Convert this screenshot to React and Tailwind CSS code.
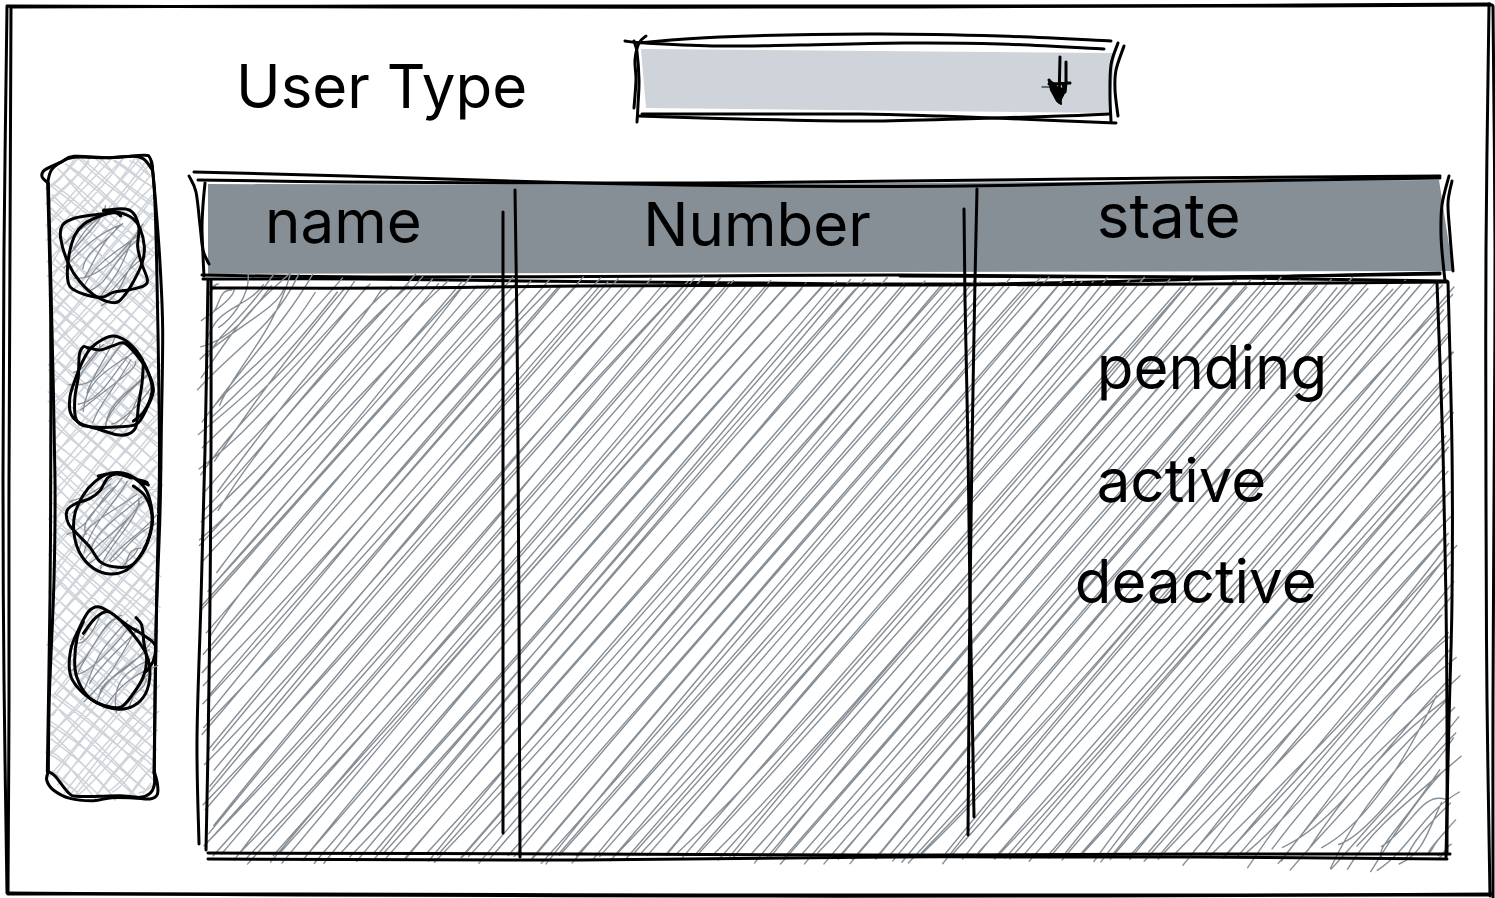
import React from "react";

/* ---------- sketch helpers ---------- */

function createRandom(seed) {
  let s = seed;
  return () => {
    s = (Math.imul(48271, s) >>> 0) & 0x7fffffff;
    return s / 0x7fffffff;
  };
}

// Smooth curve through a list of points.
function curve(points) {
  let d = `M${points[0][0]} ${points[0][1]}`;
  for (let i = 0; i < points.length - 1; i++) {
    const p0 = points[i - 1] || points[i];
    const p1 = points[i];
    const p2 = points[i + 1];
    const p3 = points[i + 2] || p2;
    const c1 = [p1[0] + (p2[0] - p0[0]) / 6, p1[1] + (p2[1] - p0[1]) / 6];
    const c2 = [p2[0] - (p3[0] - p1[0]) / 6, p2[1] - (p3[1] - p1[1]) / 6];
    d += `C${c1[0].toFixed(1)} ${c1[1].toFixed(1)} ${c2[0].toFixed(1)} ${c2[1].toFixed(1)} ${p2[0]} ${p2[1]}`;
  }
  return d;
}

// Hand-drawn hachure inside a polygon; `unit` is the number of drawing units per pixel.
function hatch({ polygon, angle, gap, wobble, seed, unit = 1 }) {
  const random = createRandom(seed);
  const a = (angle * Math.PI) / 180;
  const dir = [Math.cos(a), -Math.sin(a)];
  const normal = [Math.sin(a), Math.cos(a)];
  const depth = polygon.map((p) => p[0] * normal[0] + p[1] * normal[1]);
  const max = Math.max(...depth);
  let d = "";
  for (let t = Math.min(...depth) + gap / 2; t < max; t += gap) {
    const hits = [];
    polygon.forEach((p, i) => {
      const j = (i + 1) % polygon.length;
      if (depth[i] < t !== depth[j] < t) {
        const k = (t - depth[i]) / (depth[j] - depth[i]);
        hits.push([p[0] + (polygon[j][0] - p[0]) * k, p[1] + (polygon[j][1] - p[1]) * k]);
      }
    });
    if (hits.length < 2) continue;
    hits.sort((m, n) => m[0] * dir[0] + m[1] * dir[1] - n[0] * dir[0] - n[1] * dir[1]);
    const [s, e] = [hits[0], hits[hits.length - 1]];
    const length = Math.hypot(e[0] - s[0], e[1] - s[1]);
    const px = length / unit;
    const gain = px < 200 ? 1 : px > 500 ? 0.45 : 1.233 - 0.00157 * px;
    const reach = Math.min(wobble * gain, length / 5);
    for (let pass = 0; pass < 2; pass++) {
      const r = () => (random() * 2 - 1) * reach;
      const bow = ((random() * 2 - 1) * length * gain) / 60;
      const k = 0.2 + random() * 0.2;
      const at = (f) => [
        s[0] + (e[0] - s[0]) * f + normal[0] * bow + r(),
        s[1] + (e[1] - s[1]) * f + normal[1] * bow + r(),
      ];
      const c1 = at(k);
      const c2 = at(2 * k);
      const pts = [s[0] + r(), s[1] + r(), ...c1, ...c2, e[0] + r(), e[1] + r()].map((v) => v.toFixed(1));
      d += `M${pts[0]} ${pts[1]}C${pts.slice(2).join(" ")}`;
    }
  }
  return d;
}

function ellipse(cx, cy, rx, ry) {
  return Array.from({ length: 24 }, (_, i) => {
    const a = (i / 24) * Math.PI * 2;
    return [cx + rx * Math.cos(a), cy + ry * Math.sin(a)];
  });
}

function Drawing({ viewBox, children }) {
  return (
    <svg
      viewBox={viewBox}
      preserveAspectRatio="none"
      aria-hidden="true"
      className="pointer-events-none absolute inset-0 h-full w-full overflow-visible"
      fill="none"
      strokeLinecap="round"
      strokeLinejoin="round"
    >
      {children}
    </svg>
  );
}

function Ink({ lines }) {
  return lines.map((line, i) => (
    <path key={i} d={curve(line)} stroke="#000" strokeWidth="3" vectorEffect="non-scaling-stroke" />
  ));
}

function Hatch({ d, color, width }) {
  return <path d={d} stroke={color} strokeWidth={width} vectorEffect="non-scaling-stroke" />;
}

/* ---------- drawings ---------- */

const frameLines = [
  [[8, 6], [400, 7], [900, 7], [1300, 5], [1490, 4]],
  [[10, 7], [400, 6], [900, 6], [1300, 6], [1492, 5]],
  [[7, 6], [4, 250], [3, 480], [4, 680], [7, 893]],
  [[11, 8], [10, 250], [9, 480], [9, 700], [8, 893]],
  [[1489, 4], [1486, 250], [1486, 500], [1487, 700], [1490, 896]],
  [[1493, 6], [1495, 250], [1494, 500], [1493, 700], [1493, 898]],
  [[8, 893], [300, 895], [700, 896], [1100, 896], [1492, 894]],
  [[8, 894], [300, 894], [700, 895], [1100, 895], [1488, 895]],
];

const selectLines = [
  [[638, 43], [720, 37], [868, 34], [1000, 36], [1111, 41]],
  [[625, 41], [645, 43], [718, 46], [800, 45], [905, 43], [1000, 44], [1104, 49]],
  [[646, 36], [639, 43], [635, 60], [636, 80], [634, 108]],
  [[634, 41], [637, 52], [639, 80], [638, 105], [637, 122]],
  [[1118, 43], [1111, 65], [1110, 95], [1111, 121]],
  [[1124, 46], [1116, 70], [1115, 90], [1118, 116]],
  [[638, 116], [740, 119], [860, 121], [960, 119], [1060, 116], [1109, 114]],
  [[642, 114], [750, 114], [860, 114], [940, 116], [1020, 119], [1116, 123]],
];

const navLines = [
  [[143, 158], [152, 560], [152, 1050], [150, 1400], [142, 1925]],
  [[145, 158], [155, 560], [165, 1050], [162, 1350], [148, 1700], [145, 1925]],
  [[455, 95], [464, 200], [470, 400], [477, 800], [478, 1050], [470, 1400], [462, 1930]],
  [[457, 110], [467, 220], [480, 400], [488, 600], [484, 900], [480, 1150], [468, 1500], [463, 1930]],
  [[143, 158], [126, 140], [134, 120], [180, 98], [222, 79], [330, 83], [430, 76], [449, 82], [457, 110]],
  [[143, 158], [153, 122], [180, 98], [222, 82], [330, 83], [400, 79], [432, 88], [457, 120]],
  [[145, 1925], [140, 1950], [160, 1980], [210, 2005], [280, 2012], [335, 2003], [400, 2004], [450, 2007], [472, 1993], [472, 1960], [463, 1925]],
  [[145, 1925], [165, 1938], [205, 1988], [230, 1999], [300, 1999], [360, 1997], [420, 2002], [450, 1990], [463, 1965], [463, 1925]],
];

const navShape = [
  [215, 84], [430, 84], [455, 110], [468, 400], [476, 800], [476, 1100],
  [468, 1500], [460, 1960], [430, 1998], [215, 1998], [150, 1930], [152, 1400],
  [160, 1050], [152, 560], [148, 150],
];

const navHatch =
  hatch({ polygon: navShape, angle: 49, gap: 36, wobble: 13, seed: 71, unit: 3 }) +
  hatch({ polygon: navShape, angle: -41, gap: 36, wobble: 13, seed: 19, unit: 3 });

const navItems = [
  {
    label: "First item",
    viewBox: "180 228 276 300",
    hatch: hatch({ polygon: ellipse(320, 378, 108, 128), angle: 49, gap: 36, wobble: 30, seed: 401, unit: 3 }),
    lines: [
      [[310, 242], [350, 237], [385, 239], [406, 258], [417, 295], [413, 350], [425, 400], [442, 448], [432, 467], [390, 479], [340, 487], [305, 502], [250, 492], [210, 470], [202, 430], [208, 370], [225, 315], [252, 282], [300, 258], [345, 245]],
      [[362, 258], [345, 248], [285, 254], [225, 264], [188, 285], [182, 325], [205, 400], [240, 455], [290, 500], [345, 518], [370, 500], [400, 455], [426, 400], [433, 350], [420, 295], [398, 265], [360, 248], [315, 242]],
      [[312, 240], [335, 243], [358, 252]],
    ],
  },
  {
    label: "Second item",
    viewBox: "180 630 276 300",
    hatch: hatch({ polygon: ellipse(338, 768, 106, 128), angle: 49, gap: 36, wobble: 30, seed: 877, unit: 3 }),
    lines: [
      [[265, 655], [250, 650], [238, 675], [235, 740], [225, 800], [226, 860], [245, 885], [290, 892], [360, 890], [410, 882], [438, 840], [460, 785], [450, 740], [425, 695], [376, 641], [340, 647], [300, 660], [265, 653]],
      [[428, 690], [405, 657], [378, 632], [340, 618], [305, 630], [270, 657], [245, 700], [225, 750], [210, 800], [212, 850], [240, 880], [290, 896], [350, 914], [385, 912], [408, 890], [415, 830], [426, 760], [430, 700]],
      [[400, 873], [432, 845], [456, 785], [446, 730], [415, 672], [380, 640]],
    ],
  },
  {
    label: "Third item",
    viewBox: "180 42 276 300",
    hatch: hatch({ polygon: ellipse(335, 190, 108, 138), angle: 49, gap: 36, wobble: 30, seed: 1213, unit: 3 }),
    lines: [
      [[295, 48], [345, 38], [395, 50], [435, 85], [452, 130], [457, 190], [440, 250], [415, 295], [380, 330], [330, 342], [280, 325], [240, 280], [222, 220], [225, 160], [250, 105], [285, 65], [330, 40], [380, 42], [420, 64], [445, 75]],
      [[400, 78], [435, 108], [455, 160], [452, 215], [430, 275], [390, 318], [340, 320], [300, 305], [270, 262], [235, 225], [205, 190], [201, 152], [225, 132], [270, 115], [300, 92], [322, 55], [350, 42], [395, 54]],
      [[418, 60], [442, 68], [425, 72]],
    ],
  },
  {
    label: "Fourth item",
    viewBox: "180 444 276 300",
    hatch: hatch({ polygon: ellipse(338, 600, 110, 136), angle: 49, gap: 36, wobble: 30, seed: 2909, unit: 3 }),
    lines: [
      [[250, 520], [285, 475], [325, 455], [370, 490], [410, 537], [440, 585], [450, 640], [437, 700], [400, 738], [350, 747], [290, 728], [235, 685], [210, 640], [212, 570], [235, 510], [265, 455], [295, 440], [335, 460], [380, 494], [430, 525], [465, 555], [460, 602], [438, 635]],
      [[408, 473], [425, 495], [432, 550], [440, 600], [430, 650], [400, 700], [360, 742], [300, 732], [260, 705], [230, 650], [224, 600], [232, 530], [250, 485]],
    ],
  },
];

const headerLines = [
  [[194, 172], [347, 176], [580, 183], [760, 186], [964, 186], [1170, 182], [1440, 178]],
  [[198, 180], [347, 182], [515, 183], [700, 183], [900, 181], [1170, 178], [1440, 176]],
  [[189, 176], [196, 192], [200, 225], [203, 250], [209, 264]],
  [[205, 183], [203, 205], [202, 228], [203, 255], [204, 276]],
  [[1449, 176], [1442, 205], [1441, 235], [1443, 262], [1445, 281]],
  [[1452, 181], [1448, 203], [1450, 235], [1453, 271]],
  [[202, 275], [370, 277], [700, 276], [900, 275], [1170, 277], [1300, 279], [1447, 281]],
  [[203, 279], [360, 279], [520, 281], [750, 283], [970, 284], [1170, 280], [1300, 276], [1440, 273]],
  [[900, 276], [1170, 277], [1300, 276], [1440, 274]],
];

const bodyLines = [
  [[212, 288], [400, 288], [580, 286], [900, 285], [1200, 284], [1447, 282]],
  [[211, 280], [211, 450], [210, 600], [208, 750], [206, 850]],
  [[208, 280], [205, 450], [201, 600], [197, 740], [199, 844]],
  [[1437, 283], [1443, 450], [1446, 600], [1447, 720], [1447, 853]],
  [[1448, 282], [1452, 450], [1452, 600], [1449, 720], [1446, 857]],
  [[208, 853], [580, 854], [900, 855], [1200, 854], [1450, 854]],
  [[208, 859], [580, 860], [900, 857], [1200, 857], [1447, 859]],
];

const columnLines = [
  [[503, 212], [503, 450], [503, 650], [503, 833]],
  [[515, 190], [517, 330], [518, 450], [519, 620], [520, 857]],
  [[964, 209], [965, 300], [968, 450], [970, 598], [972, 700], [974, 817]],
  [[977, 189], [975, 280], [972, 450], [970, 598], [969, 700], [968, 835]],
];

const bodyHatch = hatch({
  polygon: [[208, 283], [1449, 283], [1449, 858], [208, 858]],
  angle: 49,
  gap: 13,
  wobble: 14,
  seed: 5231,
});

/* ---------- components ---------- */

function UserTypeSelect() {
  return (
    <div className="relative h-[77px]">
      <Drawing viewBox="638 43 472 77">
        <path d="M641 49L1115 53L1109 113L646 108Z" fill="#ced4da" />
        <Ink lines={selectLines} />
        <g stroke="#000" strokeWidth="3">
          <path d="M1060 57L1059 101M1066 62L1066 83L1065 92M1049 84L1070 83" />
          <path d="M1049 80L1052 86L1056 93L1059 102L1065 90L1063 85" />
          <path d="M1042 87L1051 87" strokeWidth="1" />
          <path d="M1049 80L1053 83L1060 90L1061 104L1057 101L1051 90Z" fill="#000" strokeWidth="2" />
          <path d="M1060 88L1065 88L1060 99Z" fill="#000" strokeWidth="1" />
        </g>
      </Drawing>
      <select id="user-type" className="relative h-full w-full cursor-pointer appearance-none bg-transparent px-4 text-4xl">
        <option value=""></option>
      </select>
    </div>
  );
}

function SideNav() {
  return (
    <nav aria-label="Main" className="relative w-[111px] shrink-0 self-start">
      <Drawing viewBox="141 81 333 1923">
        <Hatch d={navHatch} color="#ced4da" width="1.5" />
        <Ink lines={navLines} />
      </Drawing>
      <ul className="flex flex-col gap-[34px] pt-[49px] pb-[90px] pl-[13px]">
        {navItems.map((item) => (
          <li key={item.label}>
            <button type="button" aria-label={item.label} className="relative block h-[100px] w-[92px] cursor-pointer">
              <Drawing viewBox={item.viewBox}>
                <Hatch d={item.hatch} color="#868e96" width="1.3" />
                <Ink lines={item.lines} />
              </Drawing>
            </button>
          </li>
        ))}
      </ul>
    </nav>
  );
}

function UserTable() {
  return (
    <div className="relative mt-[23px] min-w-0 flex-1">
      <Drawing viewBox="205 180 1243 677">
        <path d="M208 184L580 185L900 183L1439 180L1453 271L900 272L208 274Z" fill="#868e96" />
        <Ink lines={headerLines} />
        <Hatch d={bodyHatch} color="#868e96" width="1.4" />
        <Ink lines={bodyLines} />
        <Ink lines={columnLines} />
      </Drawing>
      <table className="relative w-full table-fixed border-collapse text-left">
        <colgroup>
          <col className="w-[24.4%]" />
          <col className="w-[37.2%]" />
          <col className="w-[38.4%]" />
        </colgroup>
        <thead>
          <tr className="h-[97px] align-bottom">
            <th scope="col" className="pb-[26px] pl-[60px] font-normal">name</th>
            <th scope="col" className="pb-[23px] pl-[135px] font-normal">Number</th>
            <th scope="col" className="pb-[30px] pl-[126px] text-[62px] leading-none font-normal">state</th>
          </tr>
        </thead>
        <tbody>
          <tr className="h-[120px] align-bottom">
            <td />
            <td />
            <td className="pl-[126px]">pending</td>
          </tr>
          <tr className="h-[113px] align-bottom">
            <td />
            <td />
            <td className="pl-[126px]">active</td>
          </tr>
          <tr className="h-[101px] align-bottom">
            <td />
            <td />
            <td className="pl-[104px]">deactive</td>
          </tr>
          <tr className="h-[246px]">
            <td />
            <td />
            <td />
          </tr>
        </tbody>
      </table>
    </div>
  );
}

export default function App() {
  return (
    <main className="relative min-h-screen overflow-hidden bg-white pt-[43px] pb-10 font-['Inter',sans-serif] text-[60px] leading-none text-black">
      <Drawing viewBox="0 0 1495 898">
        <Ink lines={frameLines} />
      </Drawing>
      <header className="grid grid-cols-[402px_472px] items-center pl-[236px]">
        <label htmlFor="user-type" className="pt-2">User Type</label>
        <UserTypeSelect />
      </header>
      <div className="mt-[37px] flex gap-[47px] px-[47px]">
        <SideNav />
        <UserTable />
      </div>
    </main>
  );
}
